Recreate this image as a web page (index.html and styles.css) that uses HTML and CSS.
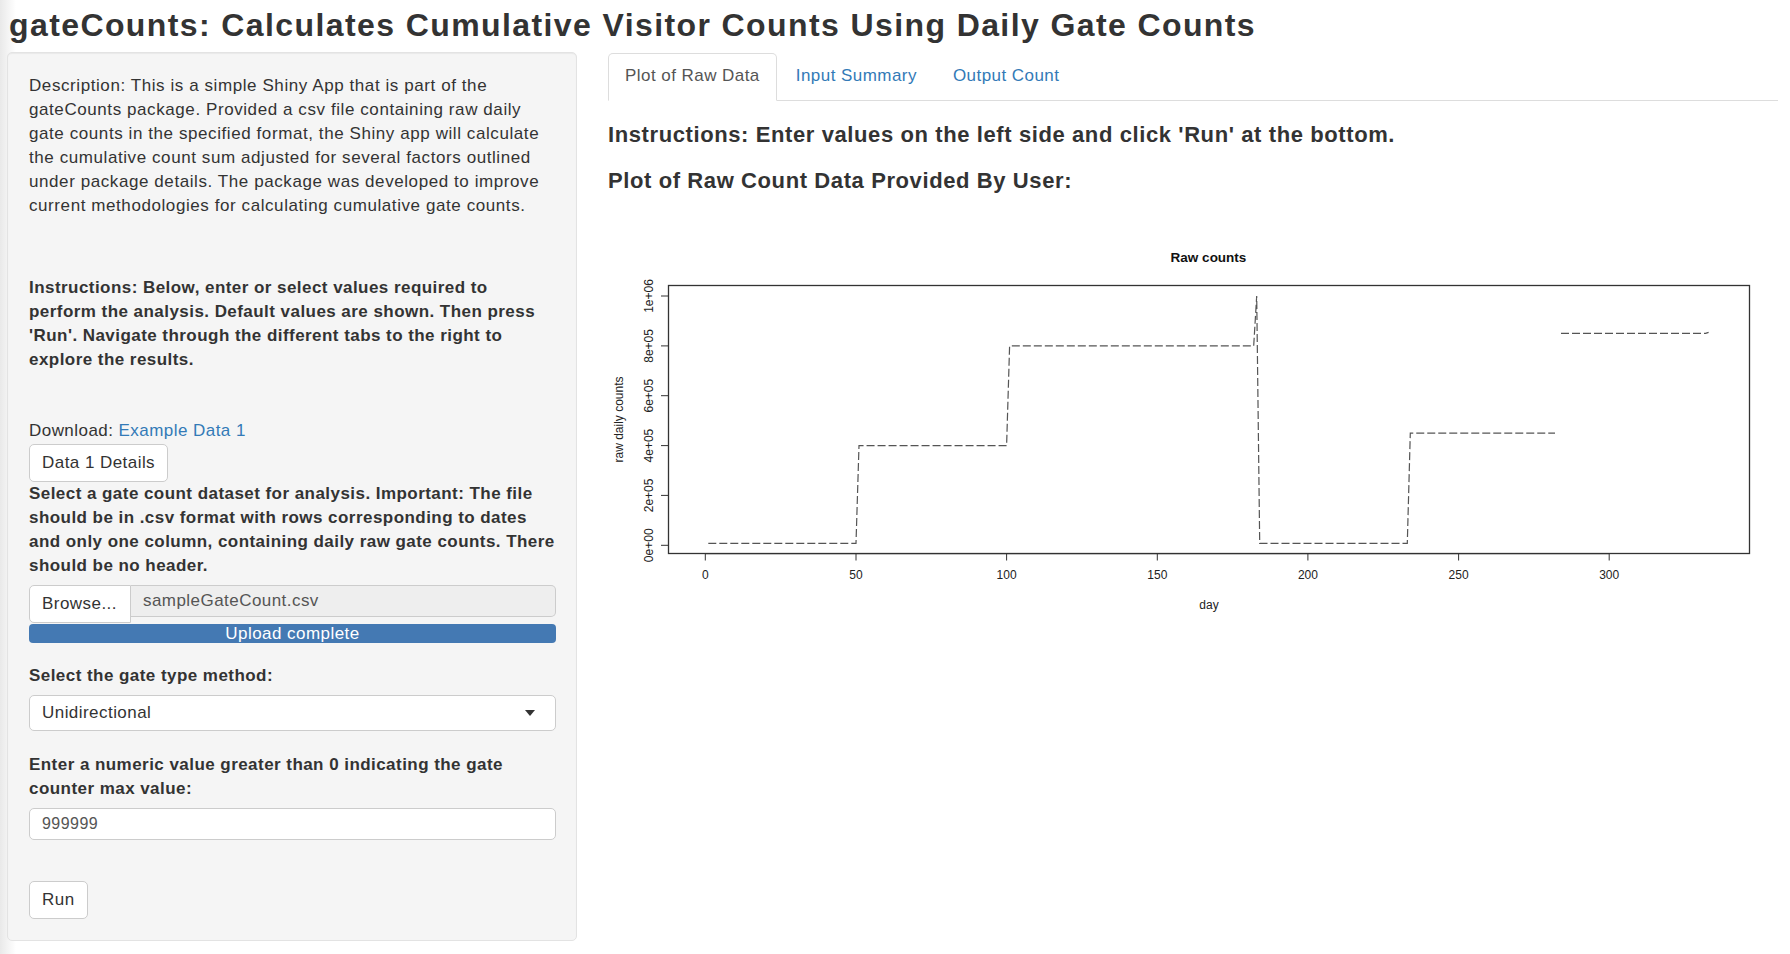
FILE: index.html
```html
<!DOCTYPE html>
<html lang="en">
<head>
<meta charset="utf-8">
<title>gateCounts</title>
<link rel="stylesheet" href="styles.css">
</head>
<body>
<div class="page">
  <h2 class="title">gateCounts: Calculates Cumulative Visitor Counts Using Daily Gate Counts</h2>
  <div class="layout">
    <aside class="well">
      <p class="desc">Description: This is a simple Shiny App that is part of the gateCounts package. Provided a csv file containing raw daily gate counts in the specified format, the Shiny app will calculate the cumulative count sum adjusted for several factors outlined under package details. The package was developed to improve current methodologies for calculating cumulative gate counts.</p>
      <p class="instr">Instructions: Below, enter or select values required to perform the analysis. Default values are shown. Then press 'Run'. Navigate through the different tabs to the right to explore the results.</p>
      <div class="download">Download: <a href="#" class="link">Example Data 1</a></div>
      <button class="btn details">Data 1 Details</button>
      <div class="lbl file-lbl">Select a gate count dataset for analysis. Important: The file should be in .csv format with rows corresponding to dates and only one column, containing daily raw gate counts. There should be no header.</div>
      <div class="file-row">
        <span class="btn browse">Browse...</span>
        <span class="file-name">sampleGateCount.csv</span>
      </div>
      <div class="progress">Upload complete</div>
      <div class="lbl gate-lbl">Select the gate type method:</div>
      <div class="select">
        <span>Unidirectional</span>
        <svg class="caret" width="10" height="6" viewBox="0 0 10 6"><path d="M0 0 L10 0 L5 6 Z" fill="#333"/></svg>
      </div>
      <div class="lbl max-lbl">Enter a numeric value greater than 0 indicating the gate counter max value:</div>
      <div class="input">999999</div>
      <button class="btn run">Run</button>
    </aside>
    <main class="main">
      <ul class="tabs">
        <li class="tab active"><a href="#">Plot of Raw Data</a></li>
        <li class="tab"><a href="#">Input Summary</a></li>
        <li class="tab"><a href="#">Output Count</a></li>
      </ul>
      <h4 class="head first">Instructions: Enter values on the left side and click 'Run' at the bottom.</h4>
      <h4 class="head second">Plot of Raw Count Data Provided By User:</h4>
      <svg class="plot" width="1170" height="430" viewBox="0 0 1170 430">
        <text class="ptitle" x="600.5" y="62" text-anchor="middle">Raw counts</text>
        <rect x="60.5" y="85.5" width="1081" height="268" fill="none" stroke="#333" stroke-width="1.3"/>
        <g class="xaxis" stroke="#333" stroke-width="1">
          <line x1="97.3" y1="353.7" x2="1001.2" y2="353.7"/>
          <line x1="97.3" y1="353.7" x2="97.3" y2="360.5"/>
          <line x1="248" y1="353.7" x2="248" y2="360.5"/>
          <line x1="398.6" y1="353.7" x2="398.6" y2="360.5"/>
          <line x1="549.3" y1="353.7" x2="549.3" y2="360.5"/>
          <line x1="699.9" y1="353.7" x2="699.9" y2="360.5"/>
          <line x1="850.6" y1="353.7" x2="850.6" y2="360.5"/>
          <line x1="1001.2" y1="353.7" x2="1001.2" y2="360.5"/>
        </g>
        <g class="tick" text-anchor="middle">
          <text x="97.3" y="379">0</text>
          <text x="248" y="379">50</text>
          <text x="398.6" y="379">100</text>
          <text x="549.3" y="379">150</text>
          <text x="699.9" y="379">200</text>
          <text x="850.6" y="379">250</text>
          <text x="1001.2" y="379">300</text>
        </g>
        <text class="tick" x="601" y="409" text-anchor="middle">day</text>
        <g class="yaxis" stroke="#333" stroke-width="1">
          <line x1="60.5" y1="345.3" x2="60.5" y2="96"/>
          <line x1="60.5" y1="345.3" x2="53" y2="345.3"/>
          <line x1="60.5" y1="295.4" x2="53" y2="295.4"/>
          <line x1="60.5" y1="245.6" x2="53" y2="245.6"/>
          <line x1="60.5" y1="195.7" x2="53" y2="195.7"/>
          <line x1="60.5" y1="145.9" x2="53" y2="145.9"/>
          <line x1="60.5" y1="96" x2="53" y2="96"/>
        </g>
        <g class="tick" text-anchor="middle">
          <text transform="translate(44.5 345.3) rotate(-90)">0e+00</text>
          <text transform="translate(44.5 295.4) rotate(-90)">2e+05</text>
          <text transform="translate(44.5 245.6) rotate(-90)">4e+05</text>
          <text transform="translate(44.5 195.7) rotate(-90)">6e+05</text>
          <text transform="translate(44.5 145.9) rotate(-90)">8e+05</text>
          <text transform="translate(44.5 96) rotate(-90)">1e+06</text>
        </g>
        <text class="tick" transform="translate(14.5 219.5) rotate(-90)" text-anchor="middle">raw daily counts</text>
        <polyline fill="none" stroke="#555" stroke-width="1.2" stroke-dasharray="8 3"
          points="100.3,343.3 248,343.3 251,245.6 398.6,245.6 401.6,145.9 645.7,145.9 648.7,96 651.7,343.3 799.3,343.3 802.3,233.1 947,233.1"/>
        <polyline fill="none" stroke="#555" stroke-width="1.2" stroke-dasharray="8 3"
          points="953,133.4 1097.6,133.4 1100.6,132.4"/>
      </svg>
    </main>
  </div>
</div>
</body>
</html>
```

FILE: styles.css
```css
* { box-sizing: border-box; }

html, body {
  margin: 0;
  padding: 0;
}

body {
  font-family: "Liberation Sans", Arial, Helvetica, sans-serif;
  font-size: 17px;
  line-height: 24px;
  letter-spacing: 0.45px;
  color: #333;
  background: linear-gradient(to right, #e9e9e9 0, #ffffff 16px);
  min-height: 954px;
}

.page {
  padding: 0 12px 0 7px;
}

.title {
  margin: 7px 0 9px 2px;
  font-size: 32px;
  line-height: 36px;
  font-weight: bold;
  letter-spacing: 1.4px;
  color: #333;
}

.layout {
  display: grid;
  grid-template-columns: 570px 1fr;
  column-gap: 31px;
  align-items: start;
}

/* ---------- sidebar ---------- */
.well {
  background: #f5f5f5;
  border: 1px solid #e3e3e3;
  border-radius: 5px;
  box-shadow: inset 0 1px 1px rgba(0, 0, 0, 0.05);
  padding: 21px 20px 21px 21px;
  display: flex;
  flex-direction: column;
  align-items: flex-start;
}

.well > * {
  margin: 0;
}

.desc {
  margin-bottom: 58px;
  letter-spacing: 0.58px;
}

.instr {
  font-weight: bold;
  margin-bottom: 47px;
}

.link {
  color: #337ab7;
  text-decoration: none;
}

.btn {
  display: inline-block;
  font: inherit;
  letter-spacing: inherit;
  color: #333;
  background: #fff;
  border: 1px solid #ccc;
  border-radius: 5px;
  padding: 6px 12px;
  line-height: 24px;
}

.details {
  margin-top: 1px;
}

.lbl {
  font-weight: bold;
}

.file-lbl {
  margin-bottom: 7px !important;
}

.file-row {
  display: flex;
  align-items: flex-start;
  width: 100%;
}

.browse {
  height: 38px;
  width: 102px;
  border-radius: 5px 0 0 5px;
  position: relative;
  z-index: 1;
}

.file-name {
  flex: 1;
  height: 32px;
  background: #eee;
  border: 1px solid #ccc;
  border-left: none;
  border-radius: 0 5px 5px 0;
  padding: 3px 12px;
  color: #555;
  line-height: 24px;
}

.progress {
  width: 100%;
  height: 19px;
  margin-top: 1px !important;
  background: #4479b3;
  border-radius: 4px;
  color: #fff;
  text-align: center;
  font-size: 17px;
  line-height: 19px;
}

.gate-lbl {
  margin-top: 21px !important;
  margin-bottom: 7px !important;
}

.select {
  width: 100%;
  height: 36px;
  background: #fff;
  border: 1px solid #ccc;
  border-radius: 5px;
  padding: 0 20px 0 12px;
  display: flex;
  align-items: center;
  justify-content: space-between;
}

.max-lbl {
  margin-top: 22px !important;
  margin-bottom: 7px !important;
}

.input {
  width: 100%;
  height: 32px;
  background: #fff;
  border: 1px solid #ccc;
  border-radius: 5px;
  padding: 3px 12px;
  color: #555;
  font-size: 16px;
  line-height: 24px;
}

.run {
  margin-top: 41px !important;
  height: 38px;
}

/* ---------- main ---------- */
.main {
  min-width: 0;
}

.tabs {
  list-style: none;
  margin: 1px 0 0;
  padding: 0;
  display: flex;
  border-bottom: 1px solid #ddd;
  height: 48px;
}

.tab {
  margin: 0 2px -1px 0;
}

.tab a {
  display: block;
  padding: 10px 16px 12px;
  line-height: 24px;
  border: 1px solid transparent;
  border-radius: 5px 5px 0 0;
  color: #337ab7;
  text-decoration: none;
}

.tab.active a {
  color: #555;
  background: #fff;
  border-color: #ddd #ddd transparent;
}

.head {
  margin: 0;
  font-size: 22px;
  line-height: 24px;
  font-weight: bold;
  letter-spacing: 0.6px;
  color: #333;
}

.head.first {
  margin-top: 22px;
}

.head.second {
  margin-top: 22px;
}

.plot {
  display: block;
  margin-top: 7px;
}

.plot text {
  font-family: "Liberation Sans", Arial, sans-serif;
  letter-spacing: 0;
}

.ptitle {
  font-size: 13.5px;
  font-weight: bold;
  fill: #111;
}

.tick {
  font-size: 12px;
  fill: #222;
}
```
